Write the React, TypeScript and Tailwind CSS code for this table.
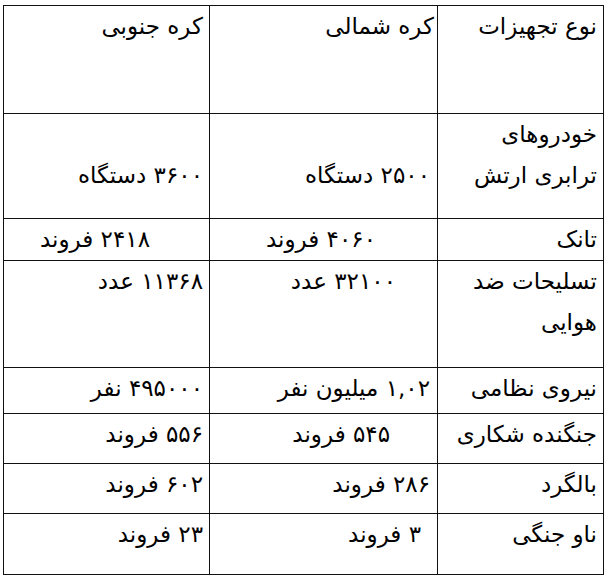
import React from "react";

type Cell = { lines: string[]; pr: string };
type Row = { h: string; cells: Cell[] };

const rows: Row[] = [
  {
    h: "h-[108px]",
    cells: [
      { lines: ["نوع تجهیزات"], pr: "pr-[6px]" },
      { lines: ["کره شمالی"], pr: "pr-[3px]" },
      { lines: ["کره جنوبی"], pr: "pr-[6px]" },
    ],
  },
  {
    h: "h-[105px]",
    cells: [
      { lines: ["خودروهای", "ترابری ارتش"], pr: "pr-[6px]" },
      { lines: ["\u00a0", "۲۵۰۰ دستگاه"], pr: "pr-[7px]" },
      { lines: ["\u00a0", "۳۶۰۰ دستگاه"], pr: "pr-[6px]" },
    ],
  },
  {
    h: "h-[42px]",
    cells: [
      { lines: ["تانک"], pr: "pr-[6px]" },
      { lines: ["۴۰۶۰ فروند"], pr: "pr-[61px]" },
      { lines: ["۲۴۱۸ فروند"], pr: "pr-[59px]" },
    ],
  },
  {
    h: "h-[107px]",
    cells: [
      { lines: ["تسلیحات ضد", "هوایی"], pr: "pr-[6px]" },
      { lines: ["۳۲۱۰۰ عدد"], pr: "pr-[41px]" },
      { lines: ["۱۱۳۶۸ عدد"], pr: "pr-[6px]" },
    ],
  },
  {
    h: "h-[46px]",
    cells: [
      { lines: ["نیروی نظامی"], pr: "pr-[6px]" },
      { lines: ["۱,۰۲ میلیون نفر"], pr: "pr-[7px]" },
      { lines: ["۴۹۵۰۰۰ نفر"], pr: "pr-[6px]" },
    ],
  },
  {
    h: "h-[50px]",
    cells: [
      { lines: ["جنگنده شکاری"], pr: "pr-[6px]" },
      { lines: ["۵۴۵ فروند"], pr: "pr-[47px]" },
      { lines: ["۵۵۶ فروند"], pr: "pr-[6px]" },
    ],
  },
  {
    h: "h-[50px]",
    cells: [
      { lines: ["بالگرد"], pr: "pr-[6px]" },
      { lines: ["۲۸۶ فروند"], pr: "pr-[7px]" },
      { lines: ["۶۰۲ فروند"], pr: "pr-[6px]" },
    ],
  },
  {
    h: "h-[61px]",
    cells: [
      { lines: ["ناو جنگی"], pr: "pr-[6px]" },
      { lines: ["۳ فروند"], pr: "pr-[16px]" },
      { lines: ["۲۳ فروند"], pr: "pr-[6px]" },
    ],
  },
];

const widths = ["w-[166px]", "w-[228px]", "w-[206px]"];

export default function App() {
  return (
    <div className="w-[605px] h-[577px] overflow-hidden bg-white pl-[3px] pt-[5px]">
      <table
        dir="rtl"
        className="table-fixed border-collapse w-[600px] text-black text-[23px] font-['DejaVu_Sans',sans-serif]"
      >
        <tbody>
          {rows.map((row, i) => (
            <tr key={i} className={row.h}>
              {row.cells.map((cell, j) => (
                <td
                  key={j}
                  className={`${widths[j]} border border-[#111] align-top text-right p-0 leading-[41px] whitespace-nowrap`}
                >
                  {cell.lines.map((line, k) => (
                    <div key={k} className={cell.pr}>
                      {line}
                    </div>
                  ))}
                </td>
              ))}
            </tr>
          ))}
        </tbody>
      </table>
    </div>
  );
}
